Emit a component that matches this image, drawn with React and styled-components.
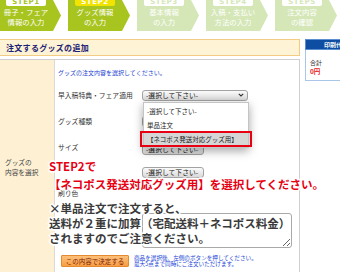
import React from 'react';
import styled, { createGlobalStyle } from 'styled-components';

const Global = createGlobalStyle`
  html, body { margin: 0; padding: 0; background: #fff; }
  body {
    width: 340px; height: 272px; overflow: hidden;
    font-family: "Noto Sans CJK JP", "Noto Sans", sans-serif;
  }
`;

const Page = styled.div`
  width: 340px; height: 272px; overflow: hidden;
  display: flex; flex-direction: column; background: #fff;
`;

const StepsBar = styled.div`
  display: flex; gap: 7px; margin-left: -1px; height: 31px; flex: none;
`;

const Step = styled.div`
  flex: none; width: 62px; height: 31px;
  background: ${p => (p.$active ? '#a8c41e' : '#d5e7b7')};
  clip-path: polygon(0 0, 54px 0, 62px 50%, 54px 100%, 0 100%);
  display: flex; flex-direction: column; align-items: center;
  padding-right: 8px; box-sizing: border-box; color: #fff;
`;

const StepLabel = styled.div`
  margin-top: -2px; width: 40px; height: 8px; border-radius: 0 0 2px 2px;
  background: ${p => (p.$current ? '#f3e400' : '#fff')};
  color: ${p => (p.$current ? '#fff' : p.$active ? '#a8c41e' : '#d5e7b7')};
  font: bold 7px/8px "DejaVu Sans", sans-serif; text-align: center; letter-spacing: 0.6px;
`;

const StepText = styled.div`
  margin-top: 1px; font-size: 7.4px; line-height: 9.5px;
  text-align: center; white-space: nowrap;
`;

const Body = styled.div`
  display: flex; gap: 5px; margin-top: 8px; flex: 1; min-height: 0;
`;

const Main = styled.div`
  width: 300px; flex: none; display: flex; flex-direction: column; gap: 3px;
`;

const Heading = styled.h2`
  margin: 0; height: 17px; box-sizing: border-box; flex: none;
  border: 1px solid #f2cb84; border-left: none; background: #fff3d6;
  padding-left: 6px; font-size: 8px; font-weight: 700; color: #1c2374;
  line-height: 15px; letter-spacing: 0.3px;
`;

const Table = styled.div`
  position: relative; flex: 1; display: flex;
  border-top: 1px solid #cfcfcf; border-right: 1px solid #cfcfcf;
`;

const LabelCol = styled.div`
  width: 55px; flex: none; box-sizing: border-box;
  background: #fdf0d3; border-right: 1px solid #d9d9d9;
  padding: 98px 0 0 5px; font-size: 6.7px; line-height: 9.5px; color: #444;
`;

const Cell = styled.div`
  flex: 1; padding: 9px 0 0 3px; display: flex; flex-direction: column;
`;

const Instruction = styled.div`
  height: 8px; font-size: 6px; line-height: 8px; color: #2342d0; white-space: nowrap;
`;

const Row = styled.div`
  display: flex; align-items: center; flex: none;
  height: ${p => p.$h}px; margin-top: ${p => p.$mt || 0}px;
`;

const RowLabel = styled.div`
  width: 84px; flex: none; font-size: 6.8px; color: #333; white-space: nowrap;
`;

const SelectBox = styled.div`
  position: relative; flex: none; width: ${p => p.$w}px; height: 11px;
  margin-top: ${p => p.$mt || 0}px;
  box-sizing: border-box; border: 1px solid #a2a2a2; border-radius: 3px;
  background: linear-gradient(#fbfbfb, #d9d9d9);
  display: flex; align-items: center; justify-content: space-between;
  padding: 0 3px; font-size: 6.8px; line-height: 9px; color: #222; white-space: nowrap;
  overflow: visible;
`;

const Chevron = () => (
  <svg width="6" height="4" viewBox="0 0 6 4">
    <path d="M0.8 0.8 L3 3 L5.2 0.8" fill="none" stroke="#333" strokeWidth="1.1" />
  </svg>
);

const Dropdown = styled.div`
  position: absolute; top: calc(100% + 2px); left: 0; width: 106px; z-index: 2;
  box-sizing: border-box; background: #fff; border: 1px solid #c4c4c4;
  box-shadow: 0 3px 9px rgba(0, 0, 0, 0.35);
  padding: 1px 0 1px; display: flex; flex-direction: column;
`;

const Option = styled.div`
  position: relative; height: ${p => (p.$hl ? 12 : 14)}px; line-height: ${p => (p.$hl ? 12 : 14)}px;
  margin: ${p => (p.$hl ? '1px 0 1px' : '0')};
  padding-left: 3px; font-size: 6.5px; color: #222; white-space: nowrap;
  background: ${p => (p.$hl ? '#d6d6d6' : 'transparent')};
  &::after {
    content: ''; display: ${p => (p.$hl ? 'block' : 'none')};
    position: absolute; top: -2px; bottom: -2px; left: -4px; right: -4px;
    border: 2px solid #e60012;
  }
`;

const TextArea = styled.textarea`
  width: 150px; height: 35px; box-sizing: border-box; margin: 0;
  border: 1px solid #a9a9a9; border-radius: 3px; background: #fff;
  resize: both; font-size: 7px; padding: 2px;
`;

const ButtonRow = styled(Row)`
  padding-left: 3px; gap: 5px;
`;

const DecideButton = styled.button`
  width: 68px; height: 12px; padding: 0; flex: none; appearance: none;
  border: 1px solid #e38a33; border-radius: 1px;
  background: linear-gradient(#fdc07a, #f89d42);
  color: #7d1c06; font-family: inherit; font-size: 6.5px; line-height: 10px;
  white-space: nowrap;
`;

const Footnote = styled.div`
  font-size: 5.6px; line-height: 6.5px; color: #1a3fd6; white-space: nowrap;
`;

const halo = `
  1px 0 0 #fff, -1px 0 0 #fff, 0 1px 0 #fff, 0 -1px 0 #fff,
  1px 1px 0 #fff, -1px -1px 0 #fff, 1px -1px 0 #fff, -1px 1px 0 #fff,
  2px 0 1px #fff, -2px 0 1px #fff, 0 2px 1px #fff, 0 -2px 1px #fff
`;

const Annotation = styled.div`
  position: absolute; left: ${p => p.$x}px; top: ${p => p.$y}px; z-index: 3;
  font-size: 11.5px; font-weight: 700; white-space: nowrap;
  line-height: ${p => p.$lh}px; color: ${p => p.$color};
  text-shadow: ${halo};
`;

const Side = styled.aside`
  width: 60px; flex: none; display: flex; flex-direction: column;
`;

const SideHead = styled.div`
  height: 11px; box-sizing: border-box; background: #0d4ea3; border: 1px solid #5b8fd2;
  color: #fff; font-size: 6px; font-weight: 700; line-height: 9px;
  padding-left: 18px; white-space: nowrap; overflow: hidden;
`;

const SideBox = styled.div`
  height: 31px; box-sizing: border-box; border: 1px solid #a9c6e8; border-top: none;
  padding: 9px 0 0 4px; font-size: 6px; line-height: 8px; color: #333;
`;

const Price = styled.div`
  color: #e8231c; font-weight: 700; font-size: 6.5px; line-height: 8px;
`;

const steps = [
  { n: 'STEP1', t: ['冊子・フェア', '情報の入力'], active: true },
  { n: 'STEP2', t: ['グッズ情報', 'の入力'], active: true, current: true },
  { n: 'STEP3', t: ['基本情報', 'の入力'] },
  { n: 'STEP4', t: ['入稿・支払い', '方法の入力'] },
  { n: 'STEP5', t: ['注文内容', 'の確認'] },
];

export default function App() {
  return (
    <>
      <Global />
      <Page>
        <StepsBar>
          {steps.map(s => (
            <Step key={s.n} $active={s.active}>
              <StepLabel $active={s.active} $current={s.current}>{s.n}</StepLabel>
              <StepText>{s.t[0]}<br />{s.t[1]}</StepText>
            </Step>
          ))}
        </StepsBar>
        <Body>
          <Main>
            <Heading>注文するグッズの追加</Heading>
            <Table>
              <LabelCol>グッズの<br />内容を選択</LabelCol>
              <Cell>
                <Instruction>グッズの注文内容を選択してください。</Instruction>
                <Row $h={26} $mt={5}>
                  <RowLabel>早入稿特典・フェア適用</RowLabel>
                  <SelectBox $w={106}>
                    <span>-選択して下さい-</span>
                    <Chevron />
                    <Dropdown>
                      <Option>-選択して下さい-</Option>
                      <Option>単品注文</Option>
                      <Option $hl>【ネコポス発送対応グッズ用】</Option>
                    </Dropdown>
                  </SelectBox>
                </Row>
                <Row $h={26}>
                  <RowLabel>グッズ種類</RowLabel>
                  <SelectBox $w={62}><span>-選択して下さい-</span></SelectBox>
                </Row>
                <Row $h={26}>
                  <RowLabel>サイズ</RowLabel>
                  <SelectBox $w={62} $mt={5}><span>-選択して下さい-</span></SelectBox>
                </Row>
                <Row $h={24}>
                  <RowLabel />
                  <SelectBox $w={62}><span>-選択して下さい-</span></SelectBox>
                </Row>
                <Row $h={18}>
                  <RowLabel>刷り色</RowLabel>
                </Row>
                <Row $h={35} $mt={11}>
                  <RowLabel />
                  <TextArea readOnly value="" />
                </Row>
                <ButtonRow $h={12} $mt={7}>
                  <DecideButton type="button">この内容で決定する</DecideButton>
                  <Footnote>
                    商品を選択後、左側のボタンを押してください。<br />
                    最大5点まで同時にご注文いただけます。
                  </Footnote>
                </ButtonRow>
              </Cell>
              <Annotation $x={49} $y={97} $lh={18} $color="#e60012">
                STEP2で<br />【ネコポス発送対応グッズ用】を選択してください。
              </Annotation>
              <Annotation $x={49} $y={141} $lh={15} $color="#3a3a3a">
                ×単品注文で注文すると、<br />
                送料が２重に加算（宅配送料＋ネコポス料金）<br />
                されますのでご注意ください。
              </Annotation>
            </Table>
          </Main>
          <Side>
            <SideHead>印刷代金</SideHead>
            <SideBox>
              合計
              <Price>0円</Price>
            </SideBox>
          </Side>
        </Body>
      </Page>
    </>
  );
}
